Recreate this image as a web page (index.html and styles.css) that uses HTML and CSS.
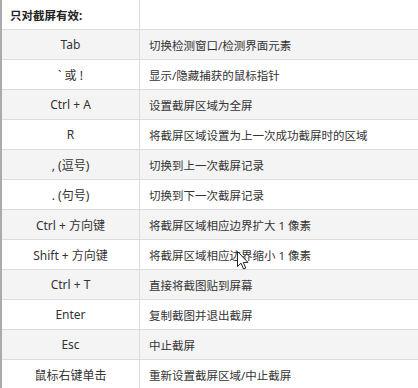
FILE: index.html
```html
<!DOCTYPE html>
<html lang="zh-CN">
<head>
<meta charset="utf-8">
<link rel="stylesheet" href="styles.css">
</head>
<body>
<div class="page">
  <div class="table">
    <div class="cell key head">只对截屏有效:</div><div class="cell desc"></div>
    <div class="cell key alt">Tab</div><div class="cell desc alt">切换检测窗口/检测界面元素</div>
    <div class="cell key">` 或 !</div><div class="cell desc">显示/隐藏捕获的鼠标指针</div>
    <div class="cell key alt">Ctrl + A</div><div class="cell desc alt">设置截屏区域为全屏</div>
    <div class="cell key">R</div><div class="cell desc">将截屏区域设置为上一次成功截屏时的区域</div>
    <div class="cell key alt">, (逗号)</div><div class="cell desc alt">切换到上一次截屏记录</div>
    <div class="cell key">. (句号)</div><div class="cell desc">切换到下一次截屏记录</div>
    <div class="cell key alt">Ctrl + 方向键</div><div class="cell desc alt">将截屏区域相应边界扩大 1 像素</div>
    <div class="cell key">Shift + 方向键</div><div class="cell desc">将截屏区域相应边界缩小 1 像素</div>
    <div class="cell key alt">Ctrl + T</div><div class="cell desc alt">直接将截图贴到屏幕</div>
    <div class="cell key">Enter</div><div class="cell desc">复制截图并退出截屏</div>
    <div class="cell key alt">Esc</div><div class="cell desc alt">中止截屏</div>
    <div class="cell key">鼠标右键单击</div><div class="cell desc">重新设置截屏区域/中止截屏</div>
  </div>
  <svg class="cursor" width="12" height="19" viewBox="0 0 12 19"><path d="M0.5 0.5 L0.5 15.5 L4 12.2 L6.6 18 L8.8 17 L6.3 11.4 L11 11.4 Z" fill="#fff" stroke="#222" stroke-width="1" stroke-linejoin="round"/></svg>
</div>
</body>
</html>
```
FILE: styles.css
```css
html, body {
  margin: 0;
  padding: 0;
  background: #fff;
}
.page {
  position: relative;
  width: 418px;
  height: 388px;
  overflow: hidden;
}
.table {
  display: grid;
  grid-template-columns: 138px 1fr;
  border-left: 2px solid #ababab;
  font-family: "Noto Sans", "Noto Sans CJK SC", sans-serif;
  font-size: 11.5px;
  color: #333;
}
.cell {
  box-sizing: border-box;
  height: 30px;
  border-bottom: 1px solid #dcdcdc;
  display: flex;
  align-items: center;
  white-space: nowrap;
}
.key {
  justify-content: center;
  border-right: 1px solid #dcdcdc;
  font-size: 12px;
}
.desc {
  padding-left: 9px;
}
.head {
  justify-content: flex-start;
  padding-left: 8px;
  font-weight: bold;
  font-size: 11.5px;
  color: #222;
}
.alt {
  background: #f4f4f4;
}
.cursor {
  position: absolute;
  left: 237px;
  top: 251px;
}
```
